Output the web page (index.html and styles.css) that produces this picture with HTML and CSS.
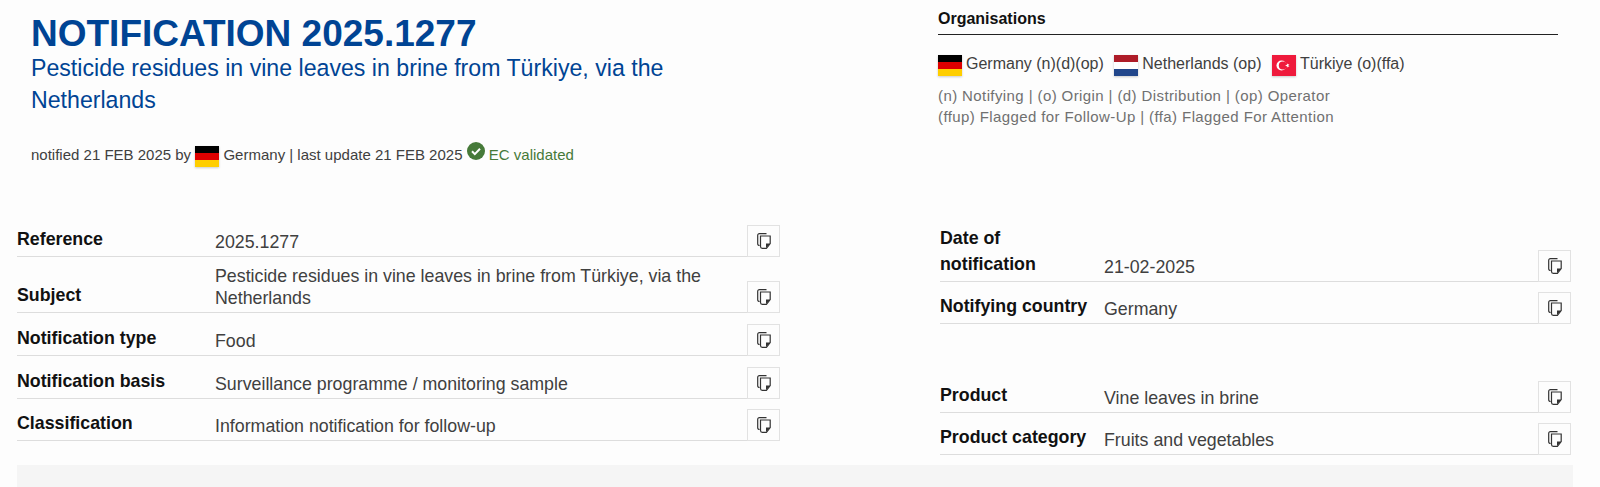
FILE: index.html
```html
<!DOCTYPE html>
<html lang="en">
<head>
    <meta charset="UTF-8">
    <meta name="viewport" content="width=device-width, initial-scale=1.0">
    <title>Notification 2025.1277</title>
    <link rel="stylesheet" href="styles.css">
</head>
<body>
    <svg class="sprites" width="0" height="0">
        <symbol id="flag-de" viewBox="0 0 24 21">
            <rect width="24" height="7" fill="#000"/>
            <rect y="7" width="24" height="7" fill="#d00"/>
            <rect y="14" width="24" height="7" fill="#ffce00"/>
        </symbol>
        <symbol id="flag-nl" viewBox="0 0 24 21">
            <rect width="24" height="7" fill="#ae1c28"/>
            <rect y="7" width="24" height="7" fill="#fff"/>
            <rect y="14" width="24" height="7" fill="#21468b"/>
        </symbol>
        <symbol id="flag-tr" viewBox="0 0 24 21">
            <rect width="24" height="21" fill="#ef1a3c"/>
            <circle cx="9.5" cy="10.5" r="5" fill="#fff"/>
            <circle cx="10.8" cy="10.5" r="4" fill="#ef1a3c"/>
            <polygon points="13,10.5 17.4,9 15,12.8 15,8.2 17.4,12" fill="#fff"/>
        </symbol>
        <symbol id="copy" viewBox="0 0 14 16">
            <path d="M2.6 12.5C1.4 12.5 .7 11.8 .7 10.7V2.4C.7 1.4 1.4 .7 2.4 .7H9.5" fill="none" stroke="currentColor" stroke-width="1.2"/>
            <path d="M3.5 3H13.2V10.5L9.4 15.3H5.3C4.2 15.3 3.5 14.6 3.5 13.5Z" fill="none" stroke="currentColor" stroke-width="1.2"/>
            <path d="M9 15V10.6H13.2Z" fill="currentColor"/>
        </symbol>
    </svg>

    <header class="head">
        <div class="summary">
            <h1>NOTIFICATION 2025.1277</h1>
            <h2>Pesticide residues in vine leaves in brine from Türkiye, via the Netherlands</h2>
            <p class="meta">
                notified 21 FEB 2025 by
                <svg class="flag"><use href="#flag-de"/></svg>
                Germany | last update 21 FEB 2025
                <svg class="check" viewBox="0 0 18 18">
                    <circle cx="9" cy="9" r="9" fill="#467a39"/>
                    <path d="M5 9.3l2.8 2.8L13 6.8" fill="none" stroke="#fff" stroke-width="2"/>
                </svg>
                <span class="validated">EC validated</span>
            </p>
        </div>
        <div class="organisations">
            <h3>Organisations</h3>
            <div class="org-list">
                <span class="org"><svg class="flag"><use href="#flag-de"/></svg>Germany (n)(d)(op)</span>
                <span class="org"><svg class="flag"><use href="#flag-nl"/></svg>Netherlands (op)</span>
                <span class="org"><svg class="flag"><use href="#flag-tr"/></svg>Türkiye (o)(ffa)</span>
            </div>
            <p class="legend">(n) Notifying | (o) Origin | (d) Distribution | (op) Operator<br>(ffup) Flagged for Follow-Up | (ffa) Flagged For Attention</p>
        </div>
    </header>

    <main class="details">
        <div class="table table-left">
            <div class="row">
                <div class="label">Reference</div>
                <div class="value">2025.1277</div>
                <button class="copy"><svg><use href="#copy"/></svg></button>
            </div>
            <div class="row">
                <div class="label">Subject</div>
                <div class="value">Pesticide residues in vine leaves in brine from Türkiye, via the Netherlands</div>
                <button class="copy"><svg><use href="#copy"/></svg></button>
            </div>
            <div class="row">
                <div class="label">Notification type</div>
                <div class="value">Food</div>
                <button class="copy"><svg><use href="#copy"/></svg></button>
            </div>
            <div class="row">
                <div class="label">Notification basis</div>
                <div class="value">Surveillance programme / monitoring sample</div>
                <button class="copy"><svg><use href="#copy"/></svg></button>
            </div>
            <div class="row">
                <div class="label">Classification</div>
                <div class="value">Information notification for follow-up</div>
                <button class="copy"><svg><use href="#copy"/></svg></button>
            </div>
        </div>

        <div class="table table-right">
            <div class="row">
                <div class="label">Date of<br>notification</div>
                <div class="value">21-02-2025</div>
                <button class="copy"><svg><use href="#copy"/></svg></button>
            </div>
            <div class="row">
                <div class="label">Notifying country</div>
                <div class="value">Germany</div>
                <button class="copy"><svg><use href="#copy"/></svg></button>
            </div>
            <div class="row row-spaced">
                <div class="label">Product</div>
                <div class="value">Vine leaves in brine</div>
                <button class="copy"><svg><use href="#copy"/></svg></button>
            </div>
            <div class="row">
                <div class="label">Product category</div>
                <div class="value">Fruits and vegetables</div>
                <button class="copy"><svg><use href="#copy"/></svg></button>
            </div>
        </div>
    </main>

    <div class="footer-bar"></div>
</body>
</html>
```
FILE: styles.css
```css
* {
    margin: 0;
    padding: 0;
    box-sizing: border-box;
}

body {
    font-family: 'Liberation Sans', Arial, sans-serif;
    background: #fdfdfd;
    color: #404040;
    height: 487px;
    overflow: hidden;
    padding: 0 27px 0 17px;
}

.sprites {
    display: block;
    height: 0;
}

.head {
    display: grid;
    grid-template-columns: 921px 620px;
    height: 214px;
}

.summary {
    padding: 16px 0 0 14px;
}

h1 {
    font-size: 37px;
    line-height: 36px;
    font-weight: 700;
    color: #004494;
}

h2 {
    font-size: 23.15px;
    line-height: 32px;
    font-weight: 400;
    color: #004494;
    width: 660px;
}

.meta {
    margin-top: 26px;
    font-size: 15px;
    line-height: 24px;
}

.flag {
    width: 24px;
    height: 21px;
    flex: none;
    vertical-align: middle;
    filter: drop-shadow(0 1px 1px rgba(0,0,0,0.2));
}

.check {
    width: 18px;
    height: 18px;
    vertical-align: 0;
}

.validated {
    color: #467a39;
}

h3 {
    font-size: 16px;
    line-height: 17px;
    font-weight: 700;
    color: #111;
    padding: 10px 0 7px;
    border-bottom: 1px solid #222;
}

.org-list {
    display: flex;
    gap: 10.5px;
    margin-top: 18px;
    font-size: 16px;
    line-height: 21px;
}

.org {
    display: flex;
    align-items: center;
    gap: 4px;
}

.org .flag {
    margin: 2px 0 -2px;
}

.legend {
    margin-top: 11px;
    font-size: 15px;
    line-height: 21px;
    color: #707070;
    letter-spacing: 0.4px;
}

.details {
    display: grid;
    grid-template-columns: 763px 631px;
    justify-content: space-between;
    width: 1554px;
}

.table-right {
    margin-top: 3px;
}

.row {
    display: flex;
    align-items: flex-end;
    min-height: 43px;
    padding-top: 8px;
    border-bottom: 1px solid #ddd;
}

.table-left .row:last-child,
.table-right .row {
    min-height: 42px;
}

.table-right .row-spaced {
    margin-top: 47px;
}

.label {
    flex: none;
    width: 198px;
    padding-bottom: 4px;
    font-size: 17.8px;
    line-height: 26px;
    font-weight: 700;
    color: #111;
}

.table-right .label {
    width: 164px;
}

.value {
    flex: 1;
    padding-bottom: 3px;
    padding-right: 40px;
    font-size: 17.8px;
    line-height: 22px;
}

.copy {
    flex: none;
    width: 33px;
    height: 32px;
    margin-bottom: -1px;
    border: 1px solid #e2e2e2;
    background: #fdfdfd;
    color: #333;
    display: flex;
    align-items: center;
    justify-content: center;
}

.copy svg {
    width: 14px;
    height: 16px;
}

.footer-bar {
    height: 40px;
    width: 1556px;
    margin-top: 10px;
    background: #f5f5f5;
}
```
